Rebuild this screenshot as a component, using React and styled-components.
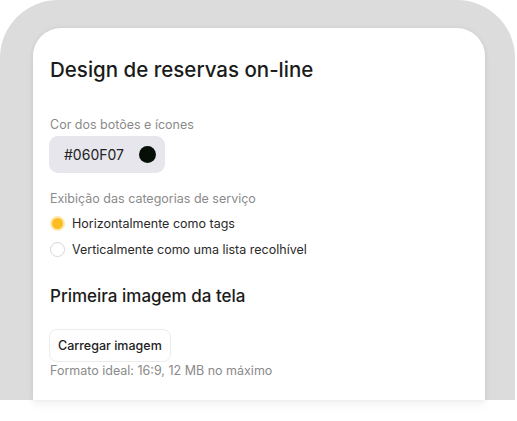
import styled, { createGlobalStyle } from 'styled-components';

const Global = createGlobalStyle`
    html, body {
        margin: 0;
        padding: 0;
        background: #ffffff;
        font-family: Inter, "Noto Sans", sans-serif;
    }
`;

export default function App() {
    return (
        <>
            <Global />
            <Page>
                <Frame>
                    <Card>
                        <Titulo>Design de reservas on-line</Titulo>

                        <Grupo gap="3px" mb="18px">
                            <Rotulo>Cor dos botões e ícones</Rotulo>
                            <CorChip>
                                <span>#060F07</span>
                                <Ponto color="#060F07" />
                            </CorChip>
                        </Grupo>

                        <Grupo gap="7px" mb="27px">
                            <Rotulo>Exibição das categorias de serviço</Rotulo>
                            <Opcao>
                                <Radio checked />
                                Horizontalmente como tags
                            </Opcao>
                            <Opcao>
                                <Radio />
                                Verticalmente como uma lista recolhível
                            </Opcao>
                        </Grupo>

                        <SubTitulo>Primeira imagem da tela</SubTitulo>

                        <Grupo gap="1px">
                            <Botao>Carregar imagem</Botao>
                            <Rotulo>Formato ideal: 16:9, 12 MB no máximo</Rotulo>
                        </Grupo>
                    </Card>
                </Frame>
            </Page>
        </>
    );
}

const Page = styled.div`
    width: 517px;
    height: 421px;
    overflow: hidden;
    background: #ffffff;
`;

const Frame = styled.div`
    width: 515px;
    height: 400px;
    box-sizing: border-box;
    background: #dcdcdc;
    border-radius: 58px 58px 0 0;
    padding: 28px 30px 0 33px;
    display: flex;
`;

const Card = styled.div`
    flex: 1;
    background: #ffffff;
    border-radius: 28px 28px 0 0;
    padding: 30px 17px 0 17px;
    display: flex;
    flex-direction: column;
    box-shadow: 0 0 5px rgba(0, 0, 0, 0.07), 0 6px 8px rgba(0, 0, 0, 0.04);
`;

const Titulo = styled.h1`
    margin: 0 0 35px 0;
    font-size: 20.5px;
    line-height: 24px;
    font-weight: 500;
    color: #1b1b1b;
`;

const Grupo = styled.div`
    display: flex;
    flex-direction: column;
    align-items: flex-start;
    gap: ${props => props.gap || '7px'};
    margin-bottom: ${props => props.mb || '0'};
`;

const Rotulo = styled.span`
    font-size: 12.5px;
    line-height: 16px;
    color: #8a8a8a;
`;

const CorChip = styled.div`
    display: flex;
    align-items: center;
    gap: 15px;
    height: 37px;
    box-sizing: border-box;
    padding: 0 9px 0 15px;
    margin-left: -1px;
    background: #e6e6ec;
    border-radius: 9px;
    font-size: 14px;
    color: #222;
`;

const Ponto = styled.span`
    width: 17px;
    height: 17px;
    border-radius: 50%;
    background: ${props => props.color};
`;

const Opcao = styled.label`
    display: flex;
    align-items: center;
    gap: 7px;
    height: 19px;
    font-size: 12.5px;
    color: #2a2a2a;
`;

const Radio = styled.span`
    width: 15px;
    height: 15px;
    box-sizing: border-box;
    border-radius: 50%;
    background: ${props => props.checked ? '#fbbd22' : '#fff'};
    border: ${props => props.checked ? '2px solid #fde9b0' : '1px solid #d6d6d6'};
`;

const SubTitulo = styled.h2`
    margin: 0 0 23px 0;
    font-size: 17px;
    line-height: 20px;
    font-weight: 500;
    color: #1b1b1b;
`;

const Botao = styled.button`
    height: 33px;
    padding: 0 8px;
    margin-left: -1px;
    background: #fff;
    border: 1px solid #ececec;
    border-radius: 8px;
    font-family: Inter, "Noto Sans", sans-serif;
    font-size: 12.5px;
    font-weight: 500;
    color: #222;
`;
